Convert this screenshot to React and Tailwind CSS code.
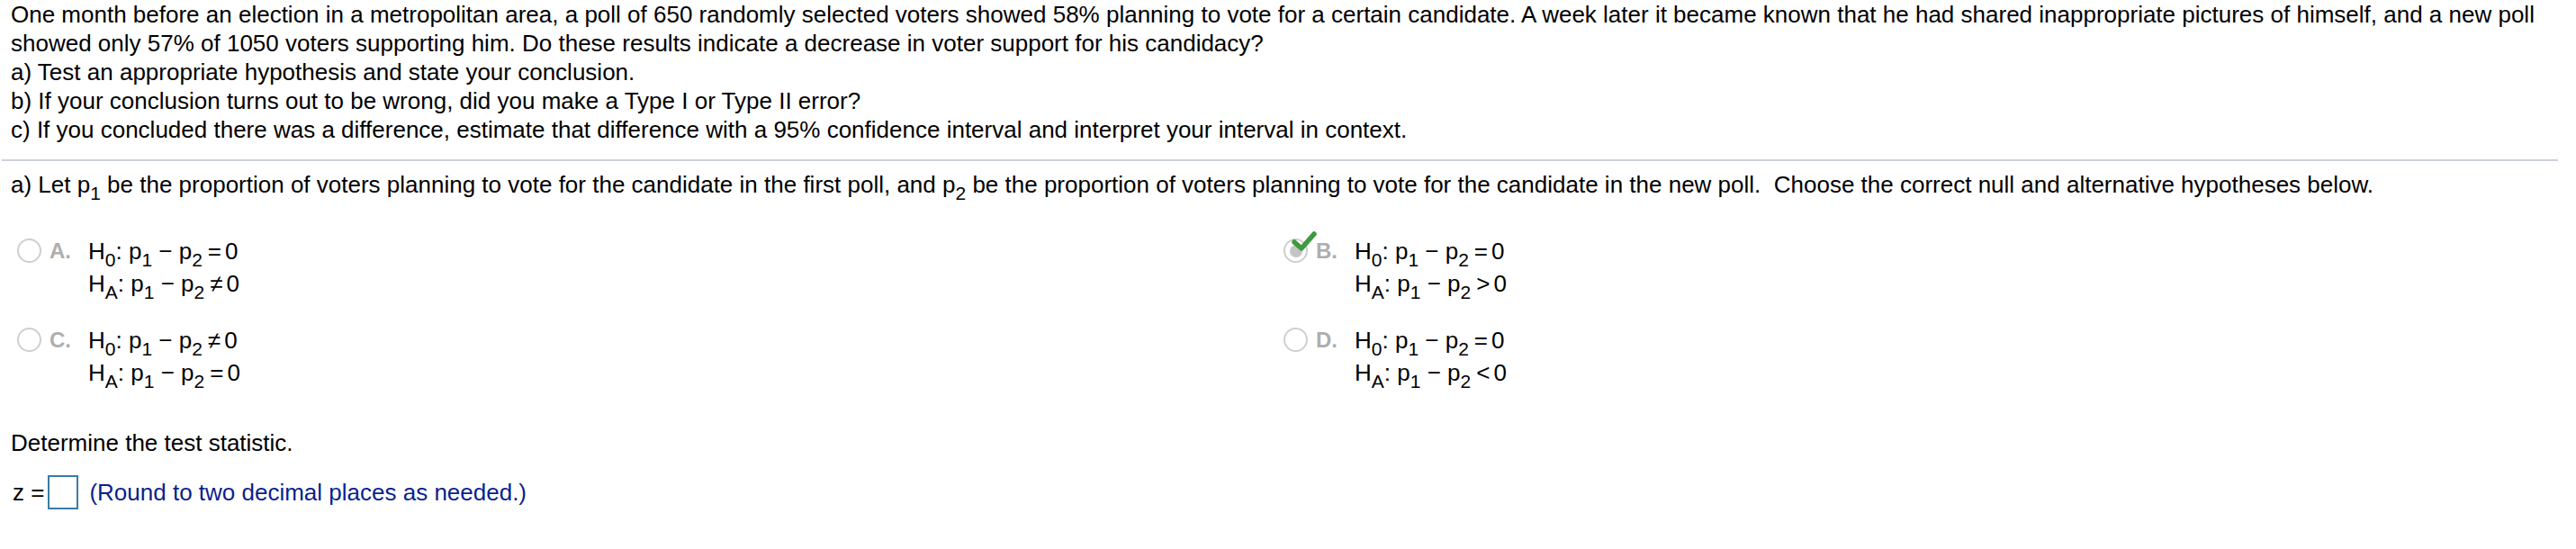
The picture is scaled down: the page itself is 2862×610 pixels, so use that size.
import React from "react";

const font = { fontFamily: '"Liberation Sans", Arial, sans-serif' };

function Sub({ children }) {
  return <span className="relative top-[8px] text-[21px] leading-none">{children}</span>;
}

function Hyp({ left, rel }) {
  return (
    <div className="flex items-baseline whitespace-pre text-[26px] leading-[36px] text-black">
      <span>H</span>
      <Sub>{left}</Sub>
      <span>: p</span>
      <Sub>1</Sub>
      <span> − p</span>
      <Sub>2</Sub>
      <span className="ml-[6px]">{rel}</span>
      <span className="ml-[4px]">0</span>
    </div>
  );
}

function Radio({ checked }) {
  return (
    <div className="relative w-[28px] h-[28px] mt-[4px]">
      <div className="w-[27px] h-[27px] rounded-full border-[2px] border-[#cfcfcf] bg-white flex items-center justify-center">
        {checked && <div className="w-[14px] h-[14px] rounded-full bg-[#c4c4c4]" />}
      </div>
      {checked && (
        <svg className="absolute -top-[8px] left-[9px]" width="28" height="24" viewBox="0 0 28 24">
          <path d="M3 12 L11 19 L25 3" fill="none" stroke="#3f9a3f" strokeWidth="5.5" strokeLinejoin="round" strokeLinecap="round" />
        </svg>
      )}
    </div>
  );
}

function Option({ letter, h0, ha, checked }) {
  return (
    <div className="flex items-start">
      <Radio checked={checked} />
      <div className="w-[51px] pl-[8px] text-[24px] leading-[36px] font-bold text-[#aeaeae]">{letter}.</div>
      <div className="flex flex-col">
        <Hyp left="0" rel={h0} />
        <Hyp left="A" rel={ha} />
      </div>
    </div>
  );
}

export default function App() {
  return (
    <div className="w-[2862px] h-[610px] bg-white text-black overflow-hidden" style={font}>
      <div className="pl-[12px] text-[26px] leading-[32px]">
        <div>One month before an election in a metropolitan area, a poll of 650 randomly selected voters showed 58% planning to vote for a certain candidate. A week later it became known that he had shared inappropriate pictures of himself, and a new poll</div>
        <div>showed only 57% of 1050 voters supporting him. Do these results indicate a decrease in voter support for his candidacy?</div>
        <div>a) Test an appropriate hypothesis and state your conclusion.</div>
        <div>b) If your conclusion turns out to be wrong, did you make a Type I or Type II error?</div>
        <div>c) If you concluded there was a difference, estimate that difference with a 95% confidence interval and interpret your interval in context.</div>
      </div>
      <div className="mt-[17px] ml-[2px] w-[2840px] h-[2px] bg-[#cdd1dc]" />
      <div className="pl-[12px] mt-[10px] text-[26px] leading-[32px] whitespace-pre">
        a) Let p<Sub>1</Sub> be the proportion of voters planning to vote for the candidate in the first poll, and p<Sub>2</Sub> be the proportion of voters planning to vote for the candidate in the new poll.  Choose the correct null and alternative hypotheses below.
      </div>
      <div className="grid grid-cols-[1407px_1fr] gap-y-[27px] pl-[19px] mt-[40px]">
        <Option letter="A" h0="=" ha="≠" />
        <Option letter="B" h0="=" ha=">" checked />
        <Option letter="C" h0="≠" ha="=" />
        <Option letter="D" h0="=" ha="<" />
      </div>
      <div className="pl-[12px] mt-[44px] text-[26px] leading-[32px]">Determine the test statistic.</div>
      <div className="pl-[14px] mt-[20px] flex items-center text-[26px] leading-[32px]">
        <span>z =</span>
        <div className="ml-[4px] w-[34px] h-[38px] border-[2px] border-[#3a7ca5] bg-white" />
        <span className="ml-[12px] text-[#0a1f8f]">(Round to two decimal places as needed.)</span>
      </div>
    </div>
  );
}
